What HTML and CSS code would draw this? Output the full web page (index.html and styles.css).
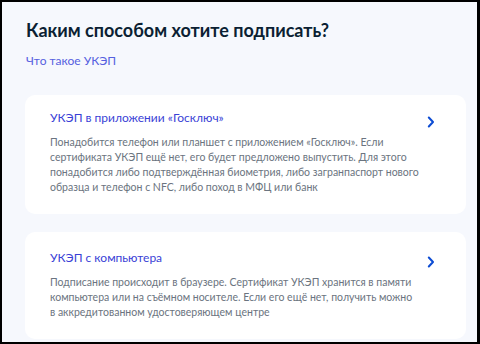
FILE: index.html
```html
<!DOCTYPE html>
<html lang="ru">
<head>
    <meta charset="UTF-8">
    <meta name="viewport" content="width=device-width, initial-scale=1.0">
    <title>Способ подписания</title>
    <link rel="stylesheet" href="styles.css">
</head>
<body>
    <div class="frame">
        <h1>Каким способом хотите подписать?</h1>
        <a class="link" href="#">Что такое УКЭП</a>

        <div class="option">
            <div class="option-text">
                <div class="option-title">УКЭП в приложении «Госключ»</div>
                <p>Понадобится телефон или планшет с приложением «Госключ». Если сертификата УКЭП ещё нет, его будет предложено выпустить. Для этого понадобится либо подтверждённая биометрия, либо загранпаспорт нового образца и телефон с NFC, либо поход в МФЦ или банк</p>
            </div>
            <svg class="chevron" width="8" height="12" viewBox="0 0 8 12">
                <path d="M1.8 1.5 L6 6 L1.8 10.5" fill="none" stroke="#0d4cd3" stroke-width="2" stroke-linecap="round" stroke-linejoin="round"/>
            </svg>
        </div>

        <div class="option second">
            <div class="option-text">
                <div class="option-title">УКЭП с компьютера</div>
                <p>Подписание происходит в браузере. Сертификат УКЭП хранится в памяти компьютера или на съёмном носителе. Если его ещё нет, получить можно в аккредитованном удостоверяющем центре</p>
            </div>
            <svg class="chevron" width="8" height="12" viewBox="0 0 8 12">
                <path d="M1.8 1.5 L6 6 L1.8 10.5" fill="none" stroke="#0d4cd3" stroke-width="2" stroke-linecap="round" stroke-linejoin="round"/>
            </svg>
        </div>
    </div>
</body>
</html>
```

FILE: styles.css
```css
html, body {
    margin: 0;
    padding: 0;
}
body {
    font-family: Lato, "Noto Sans", sans-serif;
    background: #000;
}
.frame {
    box-sizing: border-box;
    width: 480px;
    height: 344px;
    overflow: hidden;
    border: 2px solid #000;
    border-right-width: 3px;
    background: #f6f8fd;
    padding: 16px 11px 0 23px;
}
h1 {
    margin: 0;
    font-size: 18px;
    font-weight: 700;
    color: #0b1f33;
    line-height: 24px;
    padding-left: 1px;
}
.link {
    display: block;
    margin-top: 11px;
    padding-left: 1px;
    font-size: 12px;
    line-height: 16px;
    color: #5560e0;
    text-decoration: none;
}
.option {
    display: flex;
    align-items: flex-start;
    background: #fff;
    border-radius: 10px;
    margin-top: 26px;
    padding: 15px 31px 19px 25px;
}
.option.second {
    margin-top: 18px;
    padding-top: 18px;
}
.option-text {
    flex: 1;
    padding-right: 3px;
}
.second .option-text {
    padding-right: 10px;
}
.option-title {
    font-size: 12px;
    color: #3a3fd6;
    line-height: 16px;
}
.option p {
    margin: 9px 0 0;
    font-size: 10.5px;
    line-height: 15px;
    color: #6b7480;
}
.chevron {
    margin-top: 6px;
}
```
